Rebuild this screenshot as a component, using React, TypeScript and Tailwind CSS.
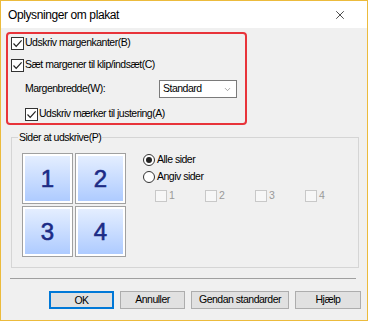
import { X, ChevronDown } from "lucide-react";

const font = { fontFamily: '"Liberation Sans", Arial, sans-serif' };

function CheckBox({ checked, disabled }: { checked?: boolean; disabled?: boolean }) {
  return (
    <span
      className={
        disabled
          ? "flex h-[12px] w-[12px] shrink-0 items-center justify-center border border-[#c8c8c8] bg-[#f7f7f7]"
          : "flex h-[13px] w-[13px] shrink-0 items-center justify-center border border-[#333333] bg-white"
      }
    >
      {checked && (
        <svg width="11" height="11" viewBox="0 0 11 11" fill="none">
          <path d="M1.5 5.5 L4.2 8.3 L9.6 2.4" stroke="#222" strokeWidth="1.2" />
        </svg>
      )}
    </span>
  );
}

function Radio({ checked }: { checked?: boolean }) {
  return (
    <span className="flex h-[12px] w-[12px] shrink-0 items-center justify-center rounded-full border border-[#333333] bg-white">
      {checked && <span className="h-[6px] w-[6px] rounded-full bg-[#222]" />}
    </span>
  );
}

function Tile({ n }: { n: number }) {
  return (
    <div className="h-[51px] w-[51px] border border-[#a0a0a0] bg-white p-[2px]">
      <div className="flex h-full w-full items-center justify-center bg-[linear-gradient(180deg,#e4eeff_0%,#aecbff_100%)] text-[24px] text-[#1c2b86] [-webkit-text-stroke:0.6px_#1c2b86]">
        {n}
      </div>
    </div>
  );
}

export default function App() {
  return (
    <div
      style={font}
      className="flex h-[321px] w-[368px] flex-col overflow-hidden border border-[#ecbb3c] bg-[#f0f0f0] text-[10.5px] tracking-[-0.5px] text-black"
    >
      {/* Title bar */}
      <div className="flex h-[27px] shrink-0 items-center justify-between bg-white pl-[7px] pr-[20px]">
        <span className="text-[12px] tracking-[-0.4px]">Oplysninger om plakat</span>
        <X className="h-[14px] w-[14px]" strokeWidth={1.2} />
      </div>

      {/* Red highlight box */}
      <div className="ml-[5px] mt-[4px] h-[93px] w-[241px] rounded-[4px] border-2 border-[#e8333a]">
        <div className="flex h-[18px] items-center pl-[3px]">
          <CheckBox checked />
          <span className="ml-[1px]">Udskriv margenkanter(B)</span>
        </div>
        <div className="mt-[4px] flex h-[18px] items-center pl-[3px]">
          <CheckBox checked />
          <span className="ml-[1px]">Sæt margener til klip/indsæt(C)</span>
        </div>
        <div className="mt-[6px] flex h-[18px] items-center pl-[17px]">
          <span className="w-[134px]">Margenbredde(W):</span>
          <div className="flex h-[18px] w-[78px] items-center justify-between border border-[#7a7a7a] bg-white pl-[3px] pr-[4px]">
            <span>Standard</span>
            <ChevronDown className="h-[9px] w-[9px] text-[#666]" strokeWidth={1.5} />
          </div>
        </div>
        <div className="mt-[9px] flex h-[14px] items-center pl-[17px]">
          <CheckBox checked />
          <span className="ml-[1px]">Udskriv mærker til justering(A)</span>
        </div>
      </div>

      {/* Group box */}
      <div className="relative ml-[10px] mt-[12px] h-[131px] w-[348px] border border-[#d5d5d5] pl-[10px] pt-[15px]">
        <span className="absolute left-[6px] top-[-7px] bg-[#f0f0f0] px-[1px] leading-[13px]">
          Sider at udskrive(P)
        </span>
        <div className="flex">
          <div className="grid grid-cols-[51px_51px] gap-[2px] tracking-normal">
            <Tile n={1} />
            <Tile n={2} />
            <Tile n={3} />
            <Tile n={4} />
          </div>
          <div className="ml-[17px] flex flex-col">
            <div className="flex h-[14px] items-center">
              <Radio checked />
              <span className="ml-[2px]">Alle sider</span>
            </div>
            <div className="mt-[3px] flex h-[14px] items-center">
              <Radio />
              <span className="ml-[2px]">Angiv sider</span>
            </div>
            <div className="mt-[5px] flex h-[14px] items-center pl-[12px] text-[#9a9a9a]">
              {[1, 2, 3, 4].map((n) => (
                <div key={n} className="flex w-[50px] items-center">
                  <CheckBox disabled />
                  <span className="ml-[2px]">{n}</span>
                </div>
              ))}
            </div>
          </div>
        </div>
      </div>

      {/* Separator */}
      <div className="ml-[9px] mt-[10px] h-px w-[346px] bg-[#a0a0a0]" />

      {/* Buttons */}
      <div className="ml-[48px] mt-[12px] flex gap-[6px]">
        <button className="h-[18px] w-[65px] border-2 border-[#0078d7] bg-[#e1e1e1]">OK</button>
        <button className="h-[18px] w-[65px] border border-[#adadad] bg-[#e1e1e1]">Annuller</button>
        <button className="h-[18px] w-[98px] border border-[#adadad] bg-[#e1e1e1]">Gendan standarder</button>
        <button className="h-[18px] w-[66px] border border-[#adadad] bg-[#e1e1e1]">Hjælp</button>
      </div>
    </div>
  );
}
